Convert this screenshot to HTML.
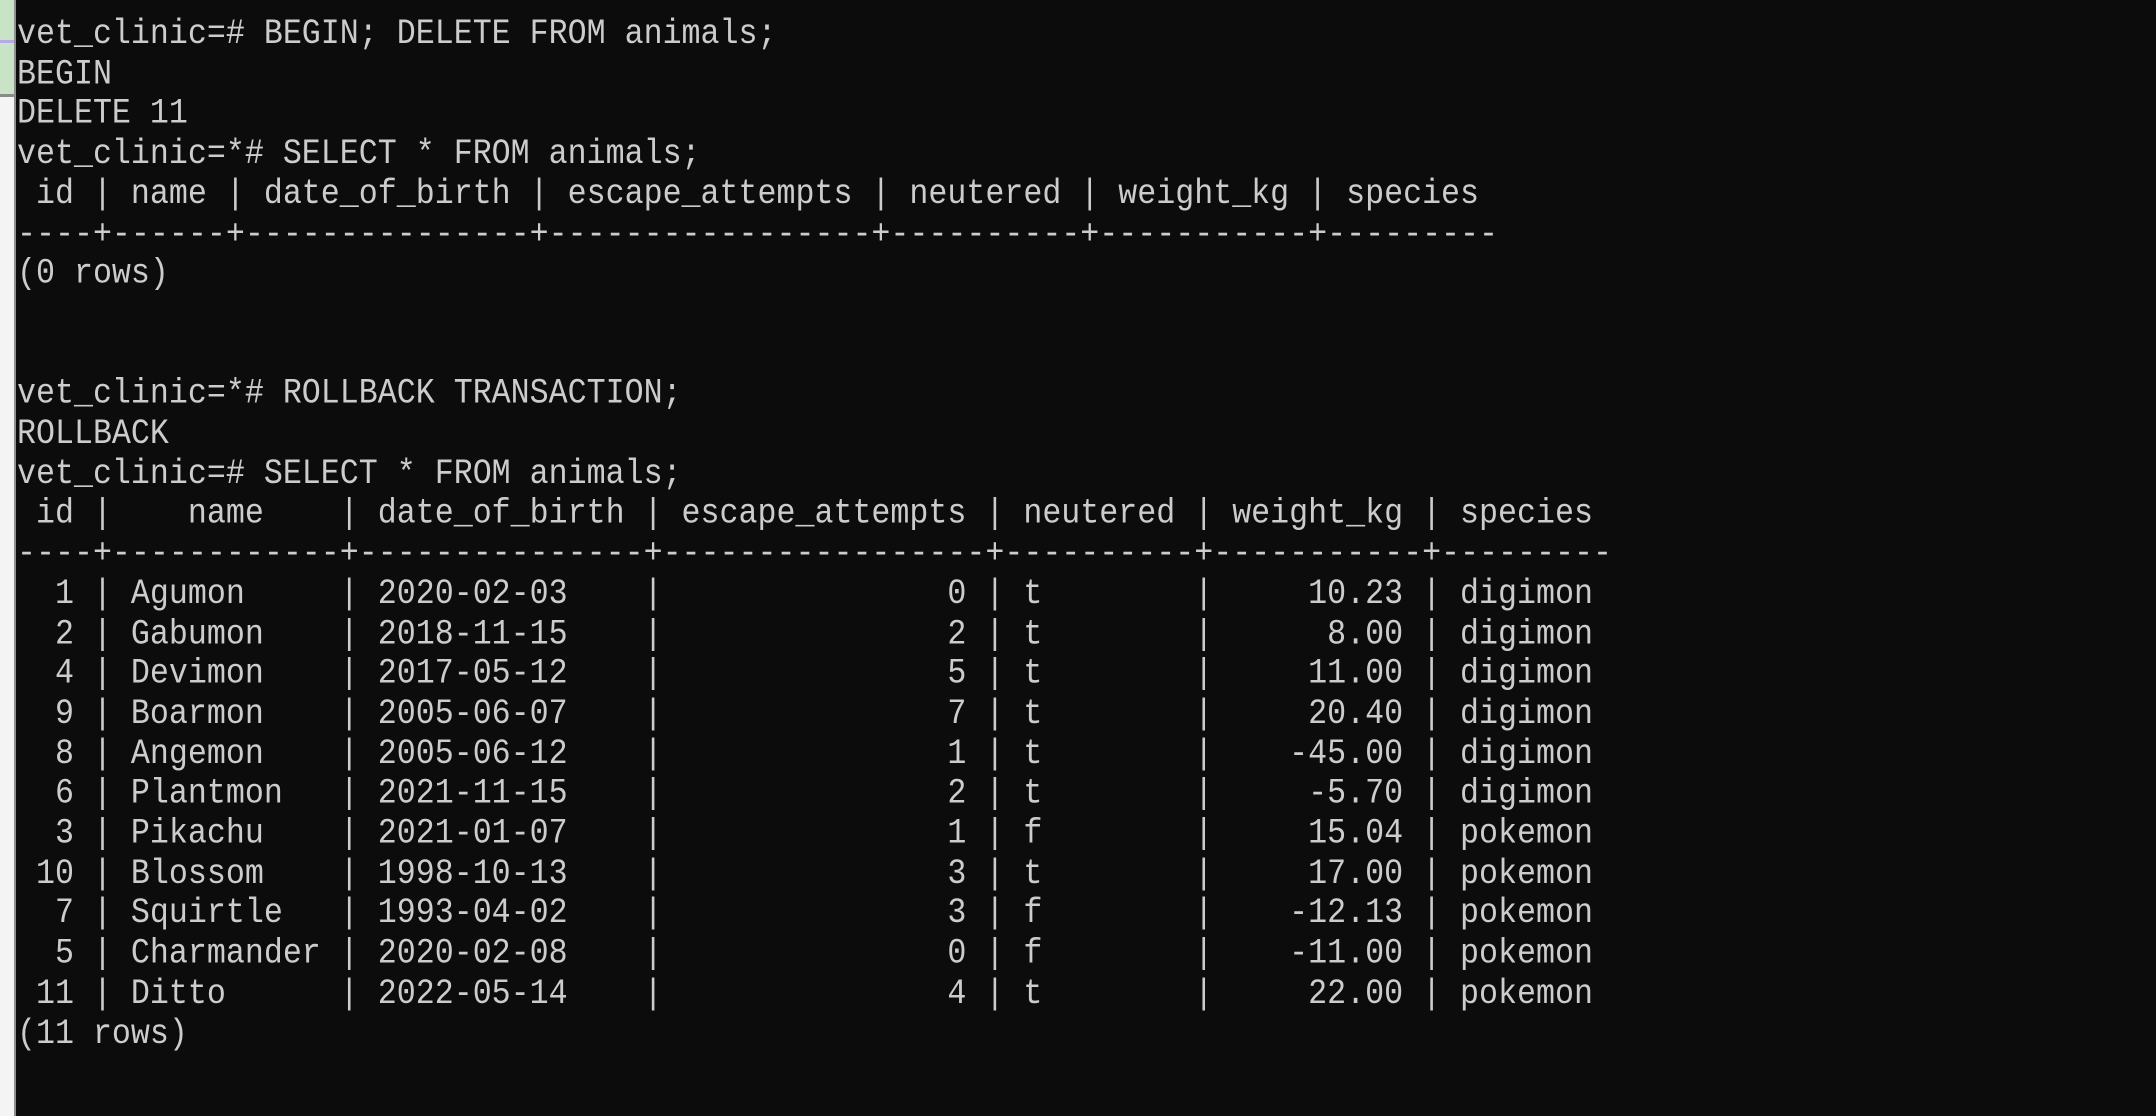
<!DOCTYPE html>
<html><head><meta charset="utf-8"><style>
html,body{margin:0;padding:0;width:2156px;height:1116px;overflow:hidden;background:#0c0c0c;}
.strip{position:absolute;left:0;top:0;width:14px;height:1116px;background:#f4f4f4;}
.strip .g{position:absolute;left:0;top:0;width:14px;height:94px;background:#c9e3c6;border-bottom:3px solid #8a8a8a;}
.strip .p{position:absolute;left:0;top:40px;width:14px;height:3px;background:#b9a8e8;}
.vl{position:absolute;left:14px;top:0;width:2px;height:1116px;background:#8f8f8f;}
pre{position:absolute;left:17px;top:15px;margin:0;font-family:"Liberation Mono",monospace;font-size:31.65px;line-height:35.71px;color:#cccccc;transform:scaleY(1.12);transform-origin:0 0;}
</style></head><body>
<div class="strip"><div class="g"></div><div class="p"></div></div><div class="vl"></div>
<pre>vet_clinic=# BEGIN; DELETE FROM animals;
BEGIN
DELETE 11
vet_clinic=*# SELECT * FROM animals;
 id | name | date_of_birth | escape_attempts | neutered | weight_kg | species
----+------+---------------+-----------------+----------+-----------+---------
(0 rows)


vet_clinic=*# ROLLBACK TRANSACTION;
ROLLBACK
vet_clinic=# SELECT * FROM animals;
 id |    name    | date_of_birth | escape_attempts | neutered | weight_kg | species
----+------------+---------------+-----------------+----------+-----------+---------
  1 | Agumon     | 2020-02-03    |               0 | t        |     10.23 | digimon
  2 | Gabumon    | 2018-11-15    |               2 | t        |      8.00 | digimon
  4 | Devimon    | 2017-05-12    |               5 | t        |     11.00 | digimon
  9 | Boarmon    | 2005-06-07    |               7 | t        |     20.40 | digimon
  8 | Angemon    | 2005-06-12    |               1 | t        |    -45.00 | digimon
  6 | Plantmon   | 2021-11-15    |               2 | t        |     -5.70 | digimon
  3 | Pikachu    | 2021-01-07    |               1 | f        |     15.04 | pokemon
 10 | Blossom    | 1998-10-13    |               3 | t        |     17.00 | pokemon
  7 | Squirtle   | 1993-04-02    |               3 | f        |    -12.13 | pokemon
  5 | Charmander | 2020-02-08    |               0 | f        |    -11.00 | pokemon
 11 | Ditto      | 2022-05-14    |               4 | t        |     22.00 | pokemon
(11 rows)</pre>
</body></html>
